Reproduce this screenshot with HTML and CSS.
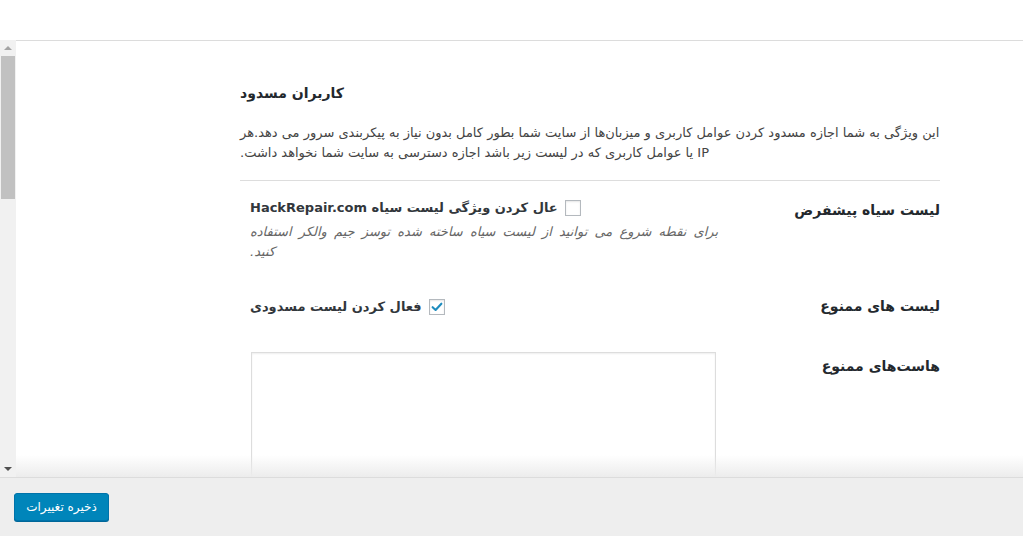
FILE: index.html
```html
<!DOCTYPE html>
<html lang="fa">
<head>
<meta charset="utf-8">
<title>کاربران مسدود</title>
<link rel="stylesheet" href="styles.css">
</head>
<body>
<div class="topbar"></div>
<div class="frame">
  <div class="scrollbar">
    <div class="arrow arrow-up"></div>
    <div class="track"><div class="thumb"></div></div>
    <div class="arrow arrow-down"></div>
  </div>
  <div class="viewport">
    <div class="wrap" dir="rtl">
      <h2 class="title">کاربران مسدود</h2>
      <p class="intro">این ویژگی به شما اجازه مسدود کردن عوامل کاربری و میزبان‌ها از سایت شما بطور کامل بدون نیاز به پیکربندی سرور می دهد.هر IP یا عوامل کاربری که در لیست زیر باشد اجازه دسترسی به سایت شما نخواهد داشت.</p>
      <hr class="sep">
      <div class="form">
        <div class="row row-1">
          <div class="th">لیست سیاه پیشفرض</div>
          <div class="td">
            <label class="check">
              <span class="box"></span>
              <span class="check-text">عال کردن ویژگی لیست سیاه HackRepair.com</span>
            </label>
            <p class="desc">برای نقطه شروع می توانید از لیست سیاه ساخته شده توسز جیم والکر استفاده کنید.</p>
          </div>
        </div>
        <div class="row row-2">
          <div class="th">لیست های ممنوع</div>
          <div class="td">
            <label class="check">
              <span class="box checked"><svg viewBox="0 0 16 16" width="14" height="14"><path d="M3 8.2 L6.4 11.4 L13 4.2" fill="none" stroke="#1e8cbe" stroke-width="2.4" stroke-linecap="round" stroke-linejoin="round"/></svg></span>
              <span class="check-text">فعال کردن لیست مسدودی</span>
            </label>
          </div>
        </div>
        <div class="row row-3">
          <div class="th">هاست‌های ممنوع</div>
          <div class="td">
            <div class="textarea"></div>
          </div>
        </div>
      </div>
    </div>
    <div class="fade"></div>
  </div>
</div>
<div class="savebar">
  <button class="btn" type="button">ذخیره تغییرات</button>
</div>
</body>
</html>
```

FILE: styles.css
```css
* { box-sizing: border-box; }
html, body { margin: 0; padding: 0; }
body {
  width: 1023px;
  height: 536px;
  overflow: hidden;
  background: #fff;
  font-family: "DejaVu Sans", "Noto Sans", sans-serif;
  font-size: 13px;
  color: #444;
  display: flex;
  flex-direction: column;
}
.topbar { height: 40px; background: #fff; flex: none; }
.frame {
  display: flex;
  height: 437px;
  flex: none;
}
.scrollbar {
  width: 16px;
  flex: none;
  background: #f1f1f1;
  display: flex;
  flex-direction: column;
}
.arrow { height: 16px; flex: none; position: relative; }
.arrow::after {
  content: "";
  position: absolute;
  left: 4px;
  width: 0; height: 0;
  border-left: 4px solid transparent;
  border-right: 4px solid transparent;
}
.arrow-up::after { top: 6px; border-bottom: 4px solid #a3a3a3; }
.arrow-down::after { top: 6px; border-top: 4px solid #505050; }
.track { flex: 1; padding: 0 1px; }
.thumb { height: 143px; background: #c1c1c1; }
.viewport {
  flex: 1;
  border-top: 1px solid #dcdcdc;
  overflow: hidden;
  position: relative;
}
.wrap {
  width: 700px;
  margin-right: 83px;
  margin-left: auto;
  padding-top: 41px;
}
.title {
  margin: 0;
  font-size: 14px;
  line-height: 22px;
  font-weight: bold;
  color: #23282d;
  text-align: left;
}
.intro {
  margin: 19px 0 0;
  line-height: 20px;
  text-align: left;
  color: #444;
}
.sep {
  margin: 17px 0 0;
  border: 0;
  border-top: 1px solid #ddd;
  height: 0;
}
.form { display: flex; flex-direction: column; }
.row { display: flex; }
.th {
  width: 200px;
  flex: none;
  padding: 20px 0 20px 10px;
  font-size: 14px;
  line-height: 18px;
  font-weight: bold;
  color: #23282d;
  text-align: right;
}
.td {
  flex: 1;
  padding: 15px 10px 15px 10px;
  text-align: left;
}
.row-1 .td { padding-top: 17px; }
.row-2 .td { padding-top: 20px; padding-bottom: 20px; }
.check {
  display: inline-flex;
  align-items: center;
  gap: 7px;
  line-height: 20px;
  font-weight: bold;
  color: #32373c;
  vertical-align: top;
}
.box {
  width: 16px;
  height: 16px;
  border: 1px solid #b4b9be;
  background: #fff;
  box-shadow: inset 0 1px 2px rgba(0,0,0,.1);
  display: flex;
  align-items: center;
  justify-content: center;
  flex: none;
}
.desc {
  margin: 4px 0 0;
  font-style: italic;
  line-height: 20px;
  word-spacing: 3px;
  color: #666;
  text-align: left;
}
.textarea {
  width: 465px;
  height: 200px;
  margin-left: 1px;
  margin-right: auto;
  border: 1px solid #ddd;
  background: #fff;
  box-shadow: inset 0 1px 2px rgba(0,0,0,.07);
}
.fade {
  position: absolute;
  left: 0; right: 0; bottom: 0;
  height: 22px;
  background: linear-gradient(rgba(255,255,255,0), #ececec);
}
.savebar {
  flex: 1;
  background: #eee;
  border-top: 1px solid #dcdcdc;
  padding: 15px 0 0 14px;
}
.btn {
  width: 95px;
  height: 28px;
  background: #0085ba;
  border: 1px solid #0073aa;
  border-radius: 3px;
  box-shadow: 0 1px 0 #006799;
  color: #fff;
  font-family: "DejaVu Sans", sans-serif;
  font-size: 12px;
  padding: 0;
  cursor: pointer;
}
```
